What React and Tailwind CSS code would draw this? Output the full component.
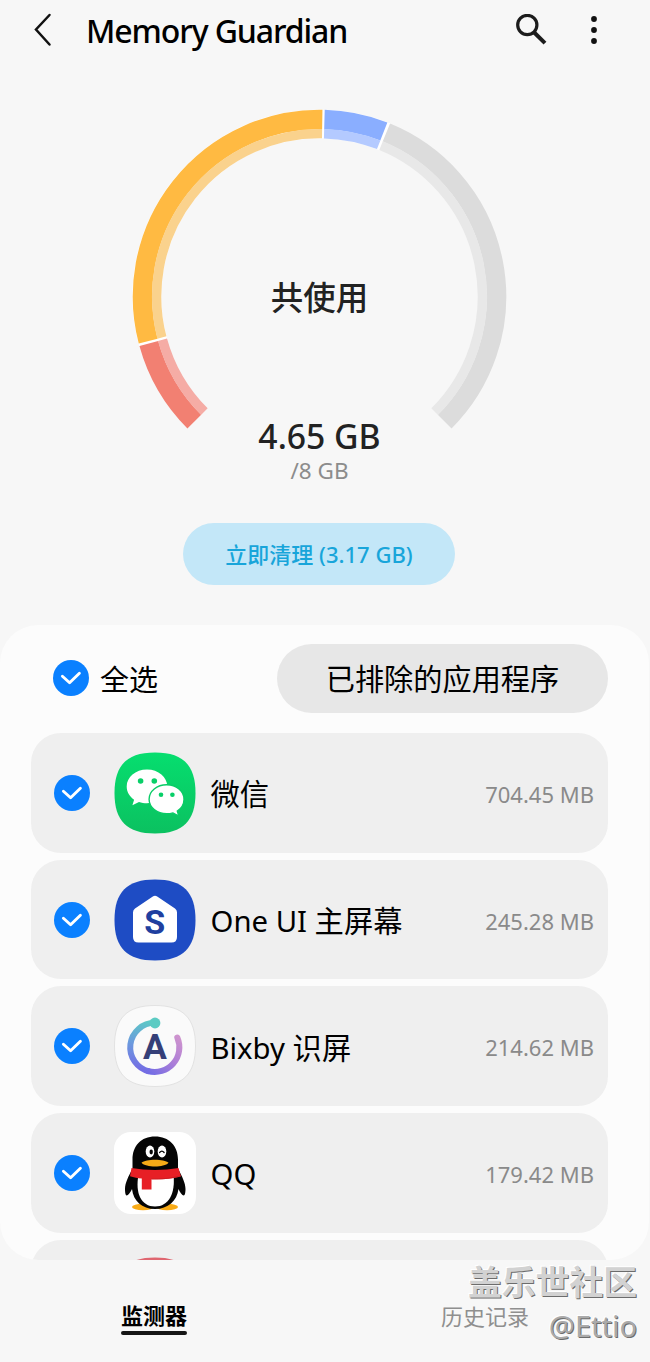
import { useState } from 'react';

const CENTER = 190;

const USAGE = [
  { id: 'system', from: -135, to: -105.4, color: '#f28072', inner: '#f5aca5' },
  { id: 'apps', from: -104.6, to: 0.9, color: '#ffba42', inner: '#fad28d' },
  { id: 'services', from: 1.6, to: 21.3, color: '#8aaeff', inner: '#b4caff' },
  { id: 'free', from: 22.2, to: 135, color: '#dcdcdc', inner: '#e8e8e8' },
];

const point = (radius, deg) => {
  const a = (deg * Math.PI) / 180;
  return `${(CENTER + radius * Math.sin(a)).toFixed(2)} ${(CENTER - radius * Math.cos(a)).toFixed(2)}`;
};

const arc = (radius, from, to) =>
  `M${point(radius, from)} A${radius} ${radius} 0 ${to - from > 180 ? 1 : 0} 1 ${point(radius, to)}`;

const Gauge = () => (
  <svg className="block h-[379px] w-[379px]" viewBox="0 0 380 380" fill="none">
    <path d={arc(173, -105.6, 22.6)} stroke="#fff" strokeWidth="29" />
    {USAGE.map((s) => (
      <g key={s.id}>
        <path d={arc(177.5, s.from, s.to)} stroke={s.color} strokeWidth="19.5" />
        <path d={arc(163.3, s.from, s.to)} stroke={s.inner} strokeWidth="9.4" />
      </g>
    ))}
  </svg>
);

const Check = ({ checked, onChange }) => (
  <button type="button" onClick={onChange} className="block h-9 w-9 shrink-0">
    <svg viewBox="0 0 36 36" className="h-9 w-9" fill="none">
      <circle cx="18" cy="18" r="18" fill={checked ? '#0a80ff' : '#c9c9c9'} />
      <path
        d="M9.400 16.200l7.200 6.600 9.800-9.600"
        stroke="#fff"
        strokeWidth="2.900"
        strokeLinecap="round"
        strokeLinejoin="round"
      />
    </svg>
  </button>
);

const SQUIRCLE =
  'M41 .5C69 .5 81.5 13 81.5 41S69 81.5 41 81.5.5 69 .5 41 13 .5 41 .5z';

const WeChatIcon = () => (
  <svg viewBox="0 0 82 82" className="h-[82px] w-[82px]">
    <defs>
      <linearGradient id="wechat" x1="0" y1="0" x2="0" y2="1">
        <stop offset="0" stopColor="#06de6f" />
        <stop offset="1" stopColor="#0bc160" />
      </linearGradient>
    </defs>
    <path d={SQUIRCLE} fill="url(#wechat)" />
    <path
      d="M33 17.500c-11.500 0-20.300 7.600-20.300 17 0 5.400 2.900 10 7.400 13.200l-1.700 5.500 6.600-3.300c2.500.8 5.200 1.300 8 1.300 11.400 0 20.300-7.400 20.300-16.700s-8.900-17-20.300-17z"
      fill="#fff"
    />
    <circle cx="26.600" cy="29" r="2.800" fill="#08cf68" />
    <circle cx="40.300" cy="29" r="2.800" fill="#08cf68" />
    <path
      d="M52.700 32.800c-9.800 0-17.600 6.300-17.600 14.400s7.800 14.600 17.600 14.600c2.300 0 4.400-.3 6.300-.9l5.800 3.100-1.500-4.900c4-2.700 6.700-6.900 6.700-11.700 0-8.100-7.600-14.600-17.300-14.600z"
      fill="#fff"
      stroke="#09cc66"
      strokeWidth="1.400"
    />
    <circle cx="47" cy="42.800" r="2.300" fill="#08cf68" />
    <circle cx="58.400" cy="42.800" r="2.300" fill="#08cf68" />
  </svg>
);

const HomeIcon = () => (
  <svg viewBox="0 0 82 82" className="h-[82px] w-[82px]">
    <path d={SQUIRCLE} fill="#1e4cc4" />
    <path
      d="M38.800 17.600q2.200-1.500 4.400 0L61 29.600q2 1.400 2 3.700V58q0 5.500-5.500 5.500h-33Q19 63.500 19 58V33.300q0-2.300 2-3.700z"
      fill="#fff"
    />
    <text
      x="40.700"
      y="55"
      textAnchor="middle"
      fontFamily="Roboto, sans-serif"
      fontSize="34"
      fontWeight="700"
      fill="#203f9f"
    >
      S
    </text>
  </svg>
);

const BixbyIcon = () => (
  <svg viewBox="0 0 82 82" className="h-[82px] w-[82px]" fill="none">
    <defs>
      <linearGradient id="bixbyLeft" x1="38" y1="15" x2="30" y2="66" gradientUnits="userSpaceOnUse">
        <stop offset="0" stopColor="#5bcbc4" />
        <stop offset=".5" stopColor="#6c9ade" />
        <stop offset="1" stopColor="#746de4" />
      </linearGradient>
      <linearGradient id="bixbyRight" x1="35" y1="67" x2="64" y2="32" gradientUnits="userSpaceOnUse">
        <stop offset="0" stopColor="#746de4" />
        <stop offset=".5" stopColor="#ac7ed8" />
        <stop offset="1" stopColor="#cd93ce" />
      </linearGradient>
    </defs>
    <path d={SQUIRCLE} fill="#fafafa" stroke="#e2e2e2" />
    <path d="M63.300 32.500A24.600 24.600 0 0 1 34 66" stroke="url(#bixbyRight)" strokeWidth="6" strokeLinecap="round" />
    <path d="M41 17.800A24.600 24.600 0 0 0 35 66.300" stroke="url(#bixbyLeft)" strokeWidth="6" />
    <circle cx="41" cy="18" r="5.400" fill="#5ccbc3" />
    <text
      x="41"
      y="54"
      textAnchor="middle"
      fontFamily="Roboto, sans-serif"
      fontSize="35.500"
      fontWeight="700"
      fill="#353f78"
    >
      A
    </text>
  </svg>
);

const QQIcon = () => (
  <svg viewBox="0 0 82 82" className="h-[82px] w-[82px]">
    <rect width="82" height="82" rx="17" fill="#fff" />
    <ellipse cx="29" cy="75" rx="11" ry="3.300" fill="#f8ab17" />
    <ellipse cx="53" cy="75" rx="11" ry="3.300" fill="#f8ab17" />
    <path
      d="M41 4.500c-14 0-22.500 9.500-22.500 23v9.500C14.500 44 11 51 11 57c0 3 .5 6.500 1.700 6.500 1.500 0 3.700-3 5.300-6.500C19.300 69 28 77 41 77s22-8 23.500-20c1.500 3.500 3.700 6.500 5.200 6.500 1.300 0 1.800-3.500 1.800-6.500 0-6-3.500-13-7.500-20v-9.500c0-13.500-9-23-23-23z"
      fill="#050505"
    />
    <path d="M24.500 43C21 61 27 74.500 41 74.500S61.500 61 59.500 43z" fill="#fff" />
    <path d="M17.500 36c15 2.500 32 2.500 47 0l2.500 8.500c-8 2.500-19 3-29.500 2.800V57.500h-9.700V46.500c-4-.4-8-1-11.800-2.300z" fill="#e71f25" />
    <path d="M37.500 47c9 .2 19-.6 27-2.600" fill="none" stroke="#c71a20" strokeWidth=".8" />
    <ellipse cx="36" cy="19.500" rx="4.300" ry="6" fill="#fff" />
    <ellipse cx="48" cy="19.500" rx="4.300" ry="6" fill="#fff" />
    <ellipse cx="37.200" cy="20" rx="1.700" ry="2.400" fill="#050505" />
    <path d="M45.600 20.500q2.300-2.600 4.500 0" fill="none" stroke="#050505" strokeWidth="1.300" strokeLinecap="round" />
    <path d="M27.500 30.700c4.500-4 22.500-4 27 0-4.500 5-22.500 5-27 0z" fill="#f8ab17" />
  </svg>
);

const APPS = [
  { id: 'wechat', name: '微信', size: '704.45 MB', Icon: WeChatIcon },
  { id: 'home', name: 'One UI 主屏幕', size: '245.28 MB', Icon: HomeIcon },
  { id: 'bixby', name: 'Bixby 识屏', size: '214.62 MB', Icon: BixbyIcon },
  { id: 'qq', name: 'QQ', size: '179.42 MB', Icon: QQIcon },
];

const AppRow = ({ app, checked, onToggle }) => (
  <li className="flex h-[119.7px] shrink-0 items-center rounded-[30px] bg-[#efefef] pr-[14px] pl-[23px]">
    <Check checked={checked} onChange={onToggle} />
    <div className="ml-6">
      <app.Icon />
    </div>
    <span className="ml-[14.5px] flex-1 pt-[3px] text-[29.300px] leading-10 whitespace-nowrap text-black">
      {app.name}
    </span>
    <span className="pt-[2px] text-[22px] leading-8 whitespace-nowrap text-[#8a8a8a]">{app.size}</span>
  </li>
);

const App = () => {
  const [selected, setSelected] = useState(APPS.map((a) => a.id));
  const allSelected = selected.length === APPS.length;

  const toggle = (id) =>
    setSelected((prev) => (prev.includes(id) ? prev.filter((x) => x !== id) : [...prev, id]));

  return (
    <div className="relative flex h-[1362px] w-[650px] flex-col overflow-hidden bg-[#f7f7f7] font-['Noto_Sans','Noto_Sans_CJK_SC',sans-serif] text-[#111]">
      {/* Header */}
      <header className="flex h-[62px] shrink-0 items-center pl-[32px]">
        <svg viewBox="0 0 22 36" className="h-9 w-[22px]" fill="none">
          <path d="M17.500 2L4 16.500 17.500 31.500" stroke="#111" strokeWidth="2.500" strokeLinecap="round" />
        </svg>
        <h1 className="ml-[32px] flex-1 text-[32px] leading-[44px] font-medium tracking-[-1.1px] text-black">
          Memory Guardian
        </h1>
        <svg viewBox="0 0 34 34" className="mr-[42px] h-[34px] w-[34px]" fill="none" stroke="#1c1c1c">
          <circle cx="13.300" cy="11" r="9.600" strokeWidth="3.200" />
          <path d="M20.200 18.500L31 29.200" strokeWidth="4" />
        </svg>
        <svg viewBox="0 0 8 30" className="mr-[52px] h-[30px] w-2" fill="#111">
          <circle cx="4" cy="3" r="2.900" />
          <circle cx="4" cy="14" r="2.900" />
          <circle cx="4" cy="25" r="2.900" />
        </svg>
      </header>

      {/* Memory usage */}
      <section className="flex h-[563px] shrink-0 flex-col items-center pr-[12px] pt-[45px]">
        <div className="grid h-[307px]">
          <div className="col-start-1 row-start-1 h-[307px]">
            <Gauge />
          </div>
          <div className="col-start-1 row-start-1 flex justify-center pt-[167px] pl-px text-[32.500px] leading-[48px] font-medium text-[#222]">
            共使用
          </div>
        </div>
        <div className="pl-px text-[33.700px] leading-[44px] font-medium text-[#222]">4.65 GB</div>
        <div className="pl-px text-[22.500px] leading-[26px] text-[#8c8c8c]">/8 GB</div>
        <button
          type="button"
          className="mt-[39px] h-[62px] w-[272px] shrink-0 rounded-full bg-[#c3e7f8] text-[22px] font-medium text-[#18a5da]"
        >
          立即清理 (3.17 GB)
        </button>
      </section>

      {/* App list */}
      <section className="mr-px flex h-[635px] shrink-0 flex-col overflow-hidden rounded-[38px] bg-[#fcfcfc] pr-[41px] pl-[31px]">
        <div className="flex h-[108px] shrink-0 items-center pb-[2px] pl-[22px]">
          <Check
            checked={allSelected}
            onChange={() => setSelected(allSelected ? [] : APPS.map((a) => a.id))}
          />
          <span className="ml-[11px] flex-1 pt-[4px] text-[29px] leading-10 text-black">全选</span>
          <button type="button" className="h-[69px] w-[331px] rounded-full bg-[#e7e7e7] pt-[4px] text-[29.200px] text-black">
            已排除的应用程序
          </button>
        </div>
        <ul className="flex flex-col gap-[7px]">
          {APPS.map((app) => (
            <AppRow
              key={app.id}
              app={app}
              checked={selected.includes(app.id)}
              onToggle={() => toggle(app.id)}
            />
          ))}
          <li className="flex h-[119.7px] shrink-0 items-center rounded-[30px] bg-[#efefef] pb-[3px] pl-[83px]">
            <svg viewBox="0 0 82 82" className="h-[82px] w-[82px]">
              <path d={SQUIRCLE} fill="#df6670" />
            </svg>
          </li>
        </ul>
      </section>

      {/* Tabs */}
      <nav className="flex flex-1 items-start justify-between pt-[40px] pr-[121px] pl-[121px]">
        <button type="button" className="flex flex-col text-[22px] leading-[31px] font-bold text-black">
          监测器
          <span className="h-1 w-full rounded-full bg-[#161616]" />
        </button>
        <button type="button" className="text-[22px] leading-8 text-[#8f8f8f]">
          历史记录
        </button>
      </nav>

      <div className="absolute right-[13px] bottom-[15px] text-right whitespace-nowrap">
        <div className="text-[33.800px] leading-[46px] font-bold text-[#d2d2d2] [text-shadow:1px_1px_0_#6c6c6c,-1px_-1px_0_#fff]">
          盖乐世社区
        </div>
        <div className="text-[29px] leading-[42px] text-[#aaa] [text-shadow:1px_1px_0_#6c6c6c,-1px_-1px_0_#fff]">
          @Ettio
        </div>
      </div>
    </div>
  );
};

export default App;
